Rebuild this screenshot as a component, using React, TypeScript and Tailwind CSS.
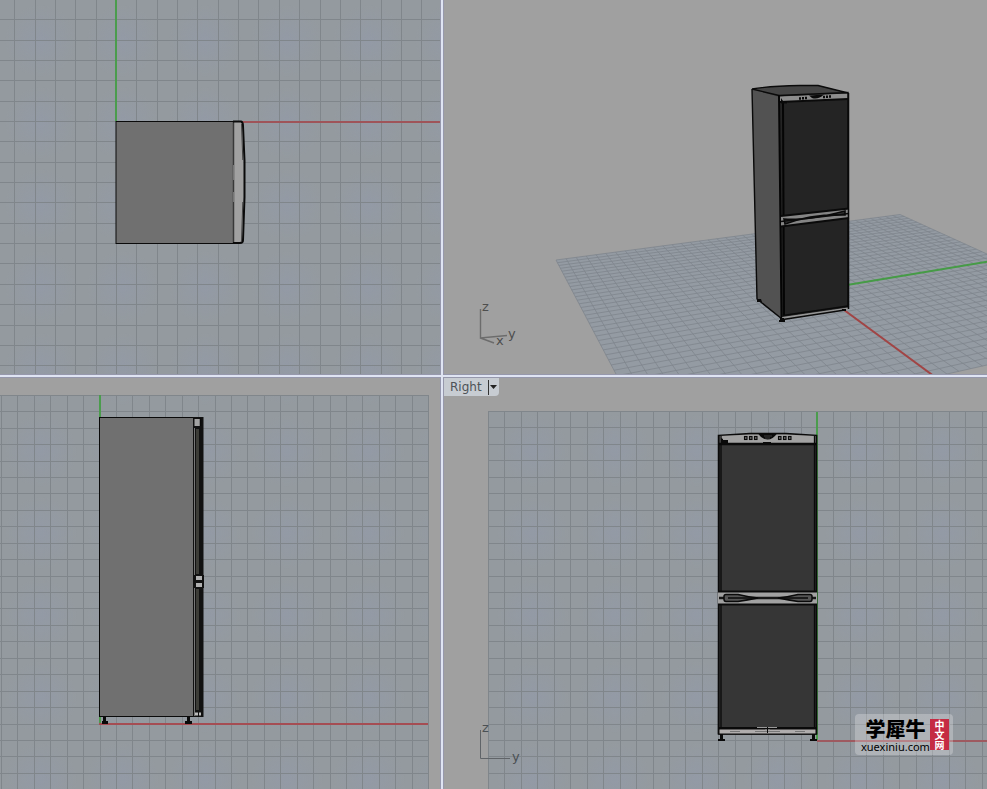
import type { ReactNode } from "react";

const EDGE = "#0a0a0a";
const GRID = "#80868b";
const range = (a: number, b: number) => Array.from({ length: b - a + 1 }, (_, i) => a + i);

type GridProps = { id: string; ox: number; oy: number; step: number; x0: number; x1: number; y0: number; y1: number };

function OrthoGrid({ id, ox, oy, step, x0, x1, y0, y1 }: GridProps) {
  const left = Math.round(ox + x0 * step);
  const right = Math.round(ox + x1 * step);
  const top = Math.round(oy + y0 * step);
  const bottom = Math.round(oy + y1 * step);
  return (
    <g>
      <defs>
        <radialGradient id={id + "g"}>
          <stop offset="0" stopColor="#919ab0" stopOpacity="0.38" />
          <stop offset="1" stopColor="#919ab0" stopOpacity="0" />
        </radialGradient>
        <pattern id={id} width="82" height="82" patternUnits="userSpaceOnUse">
          <circle cx="41" cy="41" r="36" fill={`url(#${id}g)`} />
        </pattern>
      </defs>
      <rect x={left} y={top} width={right - left} height={bottom - top} fill="#949a9f" />
      <rect x={left} y={top} width={right - left} height={bottom - top} fill={`url(#${id})`} />
      <g fill={GRID} shapeRendering="crispEdges">
        {range(x0, x1).map((i) => (
          <rect key={"v" + i} x={Math.round(ox + i * step)} y={top} width="1" height={bottom - top} />
        ))}
        {range(y0, y1).map((i) => (
          <rect key={"h" + i} x={left} y={Math.round(oy + i * step)} width={right - left} height="1" />
        ))}
      </g>
    </g>
  );
}

// Corners of the ground plane on screen: back-left, back-right, front-right, front-left
const P = [[556, 260], [900, 214.5], [1150.4, 328.2], [651, 440.6]];

function ground(s: number, t: number): [number, number] {
  const [a, b, c, d] = P;
  const dx1 = b[0] - c[0], dx2 = d[0] - c[0], sx = a[0] - b[0] + c[0] - d[0];
  const dy1 = b[1] - c[1], dy2 = d[1] - c[1], sy = a[1] - b[1] + c[1] - d[1];
  const det = dx1 * dy2 - dx2 * dy1;
  const g = (sx * dy2 - dx2 * sy) / det;
  const h = (dx1 * sy - sx * dy1) / det;
  const w = g * s + h * t + 1;
  return [
    ((b[0] - a[0] + g * b[0]) * s + (d[0] - a[0] + h * d[0]) * t + a[0]) / w,
    ((b[1] - a[1] + g * b[1]) * s + (d[1] - a[1] + h * d[1]) * t + a[1]) / w,
  ];
}

function line(s0: number, t0: number, s1: number, t1: number) {
  const p = ground(s0, t0);
  const q = ground(s1, t1);
  return `M${p[0].toFixed(2)} ${p[1].toFixed(2)}L${q[0].toFixed(2)} ${q[1].toFixed(2)}`;
}

function PerspectiveGrid() {
  const d = range(0, 40).map((i) => line(i / 40, 0, i / 40, 1) + line(0, i / 40, 1, i / 40)).join("");
  return (
    <g fill="none">
      <polygon points={P.map((p) => p.join(",")).join(" ")} fill="#949ba3" />
      <path d={d} stroke="#7f858d" strokeWidth="0.8" />
      <path d={line(0.5, 0.5, 1, 0.5)} stroke="#469b46" strokeWidth="2" />
      <path d={line(0.5, 0.5, 0.5, 1)} stroke="#a14545" strokeWidth="2" />
    </g>
  );
}

function Scene({ viewBox, label, children }: { viewBox: string; label: string; children: ReactNode }) {
  return (
    <svg viewBox={viewBox} preserveAspectRatio="xMinYMin slice" className="block h-full w-full font-['DejaVu_Sans',sans-serif] text-[13px]" role="img" aria-label={label}>
      {children}
    </svg>
  );
}

function TopView() {
  return (
    <Scene viewBox="0 0 440 374" label="Top">
      <OrthoGrid id="top" ox={116} oy={121} step={20.35} x0={-6} x1={16} y0={-6} y1={13} />
      <rect x="115" y="0" width="2" height="121" fill="#4b9c4d" />
      <rect x="116" y="121" width="324" height="2" fill="#9f5459" />
      <rect x="116" y="121.5" width="117.5" height="122" fill="#707070" stroke={EDGE} />
      <path d="M233.5 122H242L244 180L242 243H233.5Z" fill="#a1a1a1" />
      <path d="M233.5 122V243" stroke="#393939" strokeWidth="1.5" />
      <path d="M233 121.5H241Q243 122 243 126L244.5 161V197L243 240Q243 243 240 243H233" fill="none" stroke={EDGE} strokeWidth="2" />
      <path d="M241.5 124L242.800 160M242.800 202L241.500 241" fill="none" stroke="#444" />
      <path d="M233.500 165v15M233.500 192v10" stroke="#777" />
    </Scene>
  );
}

function PerspectiveView() {
  return (
    <Scene viewBox="444 0 543 374" label="Perspective">
      <PerspectiveGrid />
      <path d="M752 89L779 94L782 319L757 299Z" fill="#525252" />
      <path d="M752 89Q770 86 800 85.500H818L848 93L779 97Z" fill="#454545" />
      <path d="M779 96L848 92.500V308L782 318Z" fill="#242424" />
      <path d="M779 96.500L848 93.500V99L779 102.500Z" fill="#8e8e8e" />
      <path d="M752 89Q770 86 800 85.500H818L848 93M752 89L757 299L782 319M752 89L779 95.500L848 92.500V308" fill="none" stroke={EDGE} strokeWidth="1.400" />
      <path d="M780 102L848 99" fill="none" stroke={EDGE} strokeWidth="2" />
      <path d="M779 95L781.500 318M783 102L784 315" fill="none" stroke="#050505" strokeWidth="2" />
      <path d="M799 98.500h2m1-.2h2m1-.2h2M823 97h2m1-.2h2m1-.2h2" stroke={EDGE} strokeWidth="2.500" />
      <path d="M809 95.500L824 94.500Q818 100 812 98Z" fill={EDGE} />
      <path d="M781 98l2 3 4 .5v2h-6" fill={EDGE} />
      <path d="M781 216L849 208.500V218L781 226.500Z" fill="#858585" />
      <path d="M781 216L849 208.500M781 226.500L849 218" fill="none" stroke={EDGE} strokeWidth="2.200" />
      <path d="M784 219Q806 221 845 211v4Q811 214 785 224Z" fill="#3a3a3a" stroke={EDGE} strokeWidth="1.600" />
      <path d="M781 221.500L849 213.500" stroke={EDGE} strokeWidth="1.300" />
      <path d="M782 317L848 307.500V310L783 320Z" fill="#959595" />
      <path d="M783 315.500L848 306M783 319.500L845 310" stroke={EDGE} strokeWidth="1.600" />
      <path d="M848.500 93V309" stroke={EDGE} strokeWidth="1.500" />
      <path d="M757 299h4l1 3h-5ZM780 318h4v2h1v2h-6v-2h1ZM842 309h4v2h-4Z" fill={EDGE} />
      <path d="M480.500 309V338L507 335.500M480.500 338L494 343" stroke="#6c6c6c" strokeWidth="1.400" fill="none" />
      <g fill="#4e4e4e">
        <text x="482" y="311">z</text>
        <text x="508" y="338">y</text>
        <text x="496" y="345">x</text>
      </g>
    </Scene>
  );
}

function FrontView() {
  return (
    <Scene viewBox="0 378 440 411" label="Front">
      <OrthoGrid id="front" ox={99.5} oy={723.5} step={16.43} x0={-7} x1={20} y0={-20} y1={5} />
      <rect x="99" y="395" width="2" height="328" fill="#4b9c4d" />
      <rect x="99" y="723" width="329" height="2" fill="#a54d53" />
      <rect x="99.500" y="417.500" width="94" height="299" fill="#707070" stroke={EDGE} />
      <rect x="193" y="417" width="10.500" height="300" fill="#111" />
      <rect x="194.500" y="419" width="6" height="7" fill="#a3a3a3" />
      <path d="M200.500 418v8" stroke={EDGE} strokeWidth="1.500" />
      <path d="M194.500 428V716" stroke="#777" />
      <path d="M197.500 429V574M197.500 589V710" stroke="#3d3d38" strokeWidth="3" />
      <rect x="194" y="575" width="10" height="13" fill="#111" />
      <rect x="196" y="576" width="6" height="4" fill="#b0b0b0" />
      <rect x="196" y="583" width="6" height="4" fill="#b0b0b0" />
      <path d="M195 714h3m1 0h2" stroke="#bbb" strokeWidth="3" />
      <path d="M103 717h3v4h2v3h-6v-3h1ZM187 717h3v4h2v3h-7v-3h2Z" fill={EDGE} />
    </Scene>
  );
}

function RightView() {
  return (
    <Scene viewBox="444 378 543 411" label="Right">
      <OrthoGrid id="right" ox={817} oy={740} step={16.45} x0={-20} x1={11} y0={-20} y1={3} />
      <rect x="816" y="412" width="2" height="328" fill="#4b9c4d" />
      <rect x="817" y="740" width="170" height="2" fill="#9e5a60" />
      <path d="M718.500 435.500L750 433.500H786L816.500 435.500V734H718.500Z" fill="#363636" stroke={EDGE} strokeWidth="1.500" />
      <path d="M719.500 436L750 434.500H786L815.500 436V443H719.500Z" fill="#a2a2a2" />
      <path d="M719 444H816" stroke={EDGE} strokeWidth="2.500" />
      <path d="M719 435L718.500 734M721 436V734M814.500 436V734M816.500 435V734" stroke={EDGE} strokeWidth="1.300" />
      <path d="M758 433.500H777Q773 439.500 767.500 439.500T758 433.500Z" fill={EDGE} />
      <path d="M764 436h8M765 438h5" stroke="#555" strokeWidth="0.700" />
      <g fill="#666" stroke={EDGE} strokeWidth="1.100">
        {[745.5, 750.5, 755.5, 779.5, 784.5, 789.5].map((x) => <rect key={x} x={x - 1} y="436.500" width="2.500" height="3" />)}
      </g>
      <path d="M721 438l2 1v1h5v3h-7ZM757 443h6v-1h8v1h7v1h-21Z" fill={EDGE} />
      <rect x="718" y="591" width="99" height="14" fill="#a2a2a2" />
      <path d="M718 591.500h99M718 604.500h99" stroke={EDGE} strokeWidth="1.800" />
      <path d="M719 598H816" stroke="#171717" strokeWidth="2.500" />
      <g fill="#555" stroke={EDGE} strokeWidth="1.500">
        <path d="M724 596.500Q724 594.500 726 594.500H738Q748 597 758 598Q747 600 738 601.500H726Q724 601.500 724 599Z" />
        <path d="M812 596.500Q812 594.500 810 594.500H798Q788 597 778 598Q789 600 798 601.500H810Q812 601.500 812 599Z" />
      </g>
      <path d="M728 598H757M779 598H808" stroke={EDGE} strokeWidth="1.500" />
      <rect x="719" y="729" width="97" height="5" fill="#b0adad" stroke={EDGE} />
      <path d="M719 728h97" stroke={EDGE} strokeWidth="2" />
      <path d="M730 731.500h10m15 0h25m15 0h10" stroke="#777" />
      <path d="M757 727.500h20M765 730h5" stroke="#999" />
      <path d="M767.500 727v6" stroke={EDGE} />
      <path d="M720 734h3v5h2v2h-7v-2h2ZM812 734h3v5h2v2h-7v-2h2Z" fill={EDGE} />
      <path d="M480.500 730V758.500H510" stroke="#606468" fill="none" />
      <g fill="#4b5054">
        <text x="482" y="732">z</text>
        <text x="512" y="761">y</text>
      </g>
    </Scene>
  );
}

function Watermark() {
  return (
    <div className="absolute right-[34px] bottom-[34px] flex h-[41px] w-[98px] items-center justify-between rounded bg-white/25 px-[6px] text-black">
      <div className="flex flex-col items-center">
        <span className="font-['Noto_Sans_CJK_SC',sans-serif] text-[20px] leading-[24px] font-black whitespace-nowrap">学犀牛</span>
        <span className="font-['Noto_Sans',sans-serif] text-[11px] leading-[12px]">xuexiniu.com</span>
      </div>
      <div className="flex h-[31px] w-[19px] shrink-0 items-center justify-center bg-[#c52b43] font-['Noto_Sans_CJK_SC',sans-serif] text-[10px] leading-[19px] font-bold text-white">
        <span className="whitespace-nowrap [writing-mode:vertical-rl]">中文网</span>
      </div>
    </div>
  );
}

const pane = "relative min-h-0 min-w-0 overflow-hidden border-[#9698ac] bg-[#a0a0a0]";

export default function App() {
  return (
    <main className="grid h-screen w-full grid-cols-[441fr_544fr] grid-rows-[375fr_412fr] gap-[2px] overflow-hidden bg-[#dfe4f3]">
      <section className={`${pane} border-r border-b`}><TopView /></section>
      <section className={`${pane} border-b border-l`}><PerspectiveView /></section>
      <section className={`${pane} border-t border-r`}><FrontView /></section>
      <section className={`${pane} border-t border-l`}>
        <RightView />
        <button type="button" className="absolute top-0 left-0 flex h-[18px] w-[55px] items-center rounded-br bg-[#c7ccd2] pl-[6px] font-['DejaVu_Sans',sans-serif] text-[12px] leading-[18px] text-[#4d5257]">
          <span className="w-[38px] text-left">Right</span>
          <span className="flex h-[15px] w-[9px] items-center justify-end border-l border-[#333]">
            <svg className="h-[4px] w-[7px]" viewBox="0 0 7 4" aria-hidden="true"><path d="M0 0H7L3.500 4Z" fill="#222" /></svg>
          </span>
        </button>
        <Watermark />
      </section>
    </main>
  );
}
